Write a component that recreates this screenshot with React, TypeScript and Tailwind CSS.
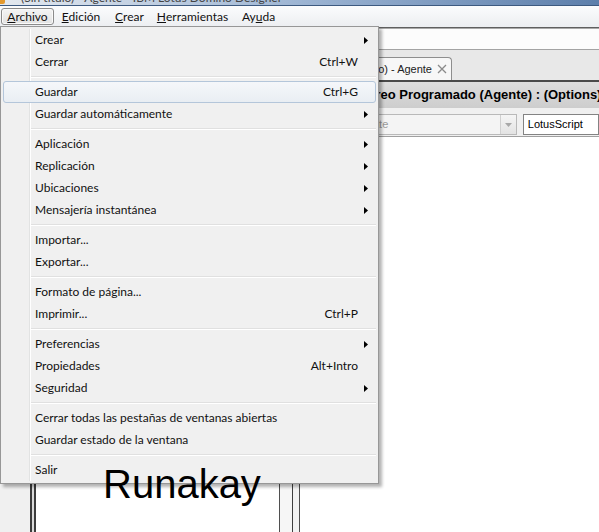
import type React from "react"

type Entry =
  | { label: string; shortcut?: string; sub?: boolean; active?: boolean }
  | "sep"

const entries: Entry[] = [
  { label: "Crear", sub: true },
  { label: "Cerrar", shortcut: "Ctrl+W" },
  "sep",
  { label: "Guardar", shortcut: "Ctrl+G", active: true },
  { label: "Guardar automáticamente", sub: true },
  "sep",
  { label: "Aplicación", sub: true },
  { label: "Replicación", sub: true },
  { label: "Ubicaciones", sub: true },
  { label: "Mensajería instantánea", sub: true },
  "sep",
  { label: "Importar..." },
  { label: "Exportar..." },
  "sep",
  { label: "Formato de página..." },
  { label: "Imprimir...", shortcut: "Ctrl+P" },
  "sep",
  { label: "Preferencias", sub: true },
  { label: "Propiedades", shortcut: "Alt+Intro" },
  { label: "Seguridad", sub: true },
  "sep",
  { label: "Cerrar todas las pestañas de ventanas abiertas" },
  { label: "Guardar estado de la ventana" },
  "sep",
  { label: "Salir" },
]

function Arrow() {
  return (
    <svg width="4" height="7" viewBox="0 0 4 7" className="absolute right-[7px] top-[7px]">
      <path d="M0 0L4 3.5L0 7Z" fill="#000" />
    </svg>
  )
}

function MenuTop({ children, w, active }: { children: React.ReactNode; w: string; active?: boolean }) {
  return (
    <div
      className={`h-[17px] flex items-center justify-center rounded-[3px] border ${w} ${
        active
          ? "border-[#8b8b8b] bg-linear-to-b from-[#f4f4f4] to-[#e2e2e2] shadow-[inset_0_0_0_1px_#fafafa]"
          : "border-transparent"
      }`}
    >
      {children}
    </div>
  )
}

export default function App() {
  return (
    <div className="relative w-[599px] h-[532px] overflow-hidden bg-white font-['Lato',sans-serif] text-[12px] text-[#111]">
      {/* Title bar, mostly cut off */}
      <div className="h-[6px] flex overflow-hidden bg-linear-to-r from-[#e4e9ef] via-[#9db5d3] to-[#5d7fab] border-b border-[#3d5a80]">
        <div className="w-[5px] h-[4px] bg-[#e49a2f] rounded-br-[2px] shrink-0" />
        <span className="ml-[16px] -mt-[11px] whitespace-nowrap text-[12px] text-[#444]">
          (Sin título) - Agente - IBM Lotus Domino Designer
        </span>
      </div>

      {/* Menu bar */}
      <div className="h-[21px] flex items-center pl-[1px] bg-linear-to-b from-[#fbfcfd] to-[#eceef1]">
        <MenuTop w="w-[53px]" active>
          <span className="underline">A</span>rchivo
        </MenuTop>
        <MenuTop w="w-[54px]">
          <span className="underline">E</span>dición
        </MenuTop>
        <MenuTop w="w-[43px]">
          <span className="underline">C</span>rear
        </MenuTop>
        <MenuTop w="w-[83px]">
          <span className="underline">H</span>erramientas
        </MenuTop>
        <MenuTop w="w-[49px]">
          Ay<span className="underline">u</span>da
        </MenuTop>
      </div>

      {/* Toolbar line + address box */}
      <div className="h-[1px] bg-[#5f5f5f]" />
      <div className="h-[1px] bg-[#a9a9a9]" />
      <div className="h-[21px] bg-[#fcfcfc] border-b border-[#a3a3a3]" />

      {/* Tab strip */}
      <div className="h-[30px] flex items-end pl-[330px] bg-[#e8e8e8] font-['Liberation_Sans',sans-serif]">
        <div className="h-[23px] w-[122px] flex items-center justify-end gap-[5px] pr-[4px] bg-[#f7f7f7] border border-b-0 border-[#8e8e8e] rounded-tr-[4px] text-[11px] text-[#222]">
          <span className="whitespace-nowrap">(Sin título) - Agente</span>
          <svg width="10" height="10" viewBox="0 0 10 10">
            <path d="M1 1L9 9M9 1L1 9" stroke="#8a8a8a" strokeWidth="1.3" />
          </svg>
        </div>
      </div>
      <div className="h-[2px] bg-[#4a4a4a]" />

      {/* Body panes */}
      <div className="flex h-[450px]">
        <div className="w-[30px] bg-[#f0f0f0]" />
        <div className="w-[6px] border-x-2 border-[#3c3c3c] bg-[#dadada]" />
        <div className="w-[243px] bg-white" />
        <div className="w-[21px] flex border-x border-[#4f4f4f]">
          <div className="w-[12px] bg-[#f6f6f6]" />
          <div className="w-[1px] bg-[#3f3f3f]" />
          <div className="w-[6px] bg-[#f3f3f3]" />
        </div>
        <div className="flex-1 flex flex-col overflow-hidden font-['Liberation_Sans',sans-serif]">
          <div className="h-[26px] flex items-center pl-[53px] bg-linear-to-b from-[#dedede] to-[#cdcdcd] text-[13px] font-bold text-black whitespace-nowrap">
            Correo Programado (Agente) : (Options)
          </div>
          <div className="h-[29px] flex items-start pt-[6px] pl-[6px] bg-[#f0f0f0] border-b border-[#a0a0a0]">
            <div className="w-[222px] h-[21px] flex items-center border border-[#b9b9b9] bg-[#f4f4f4]">
              <span className="flex-1 pl-[33px] text-[11px] text-[#9a9a9a]">Terminate</span>
              <div className="w-[16px] h-full flex items-center justify-center border-l border-[#d0d0d0] bg-linear-to-b from-[#f5f5f5] to-[#e3e3e3]">
                <svg width="7" height="4" viewBox="0 0 7 4">
                  <path d="M0 0H7L3.5 4Z" fill="#a8a8a8" />
                </svg>
              </div>
            </div>
            <div className="ml-[6px] w-[80px] h-[21px] flex items-center pl-[4px] border border-[#838383] bg-white text-[11px] text-black">
              LotusScript
            </div>
          </div>
          <div className="flex-1 bg-white" />
        </div>
      </div>

      {/* Archivo dropdown */}
      <div className="absolute left-0 top-[26px] z-10 w-[379px] p-[2px] bg-[#f0f0f0] border border-[#979797] shadow-[3px_3px_3px_rgba(0,0,0,0.3)]">
        <div className="absolute left-[28px] top-[2px] bottom-[2px] w-[2px] border-l border-[#e2e3e3] border-r border-r-white" />
        {entries.map((e, i) =>
          e === "sep" ? (
            <div key={i} className="h-[8px] ml-[27px] flex flex-col justify-center">
              <div className="h-[1px] bg-[#e0e0e0]" />
              <div className="h-[1px] bg-white" />
            </div>
          ) : (
            <div
              key={i}
              className={`relative h-[22px] flex items-center pl-[31px] rounded-[3px] border ${
                e.active
                  ? "border-[#b4c6da] bg-linear-to-b from-[#f5f7fa] to-[#e9eef3]"
                  : "border-transparent"
              }`}
            >
              <span className="whitespace-nowrap">{e.label}</span>
              {e.shortcut && <span className="absolute right-[17px]">{e.shortcut}</span>}
              {e.sub && <Arrow />}
            </div>
          )
        )}
      </div>

      {/* Watermark */}
      <div className="absolute left-[103px] top-[464px] z-20 text-[40px] leading-none text-black font-['Liberation_Sans',sans-serif]">
        Runakay
      </div>
    </div>
  )
}
